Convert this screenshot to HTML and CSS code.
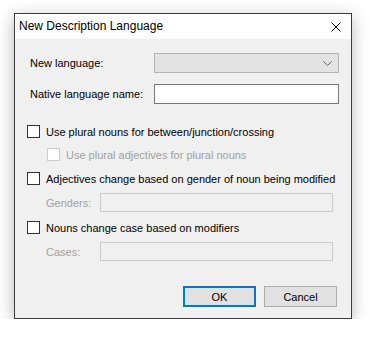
FILE: index.html
```html
<!DOCTYPE html>
<html lang="en">
<head>
    <meta charset="UTF-8">
    <title>New Description Language</title>
    <link rel="stylesheet" href="styles.css">
</head>
<body>

    <!-- Dialog Window -->
    <div class="window">
        <div class="titlebar">
            <span class="title">New Description Language</span>
            <svg class="close" width="10" height="10" viewBox="0 0 10 10">
                <path d="M0.5 0.5 L9.5 9.5 M9.5 0.5 L0.5 9.5" stroke="#000" stroke-width="1" fill="none"/>
            </svg>
        </div>

        <div class="content">
            <div class="field first">
                <label>New language:</label>
                <div class="combo">
                    <svg width="9" height="5" viewBox="0 0 9 5">
                        <path d="M0.5 0.5 L4.5 4.5 L8.5 0.5" stroke="#606060" stroke-width="1" fill="none"/>
                    </svg>
                </div>
            </div>
            <div class="field second">
                <label>Native language name:</label>
                <div class="textbox"></div>
            </div>

            <div class="check c1">
                <span class="box"></span>
                <span>Use plural nouns for between/junction/crossing</span>
            </div>
            <div class="check c2 disabled">
                <span class="box"></span>
                <span>Use plural adjectives for plural nouns</span>
            </div>
            <div class="check c3">
                <span class="box"></span>
                <span>Adjectives change based on gender of noun being modified</span>
            </div>
            <div class="subfield s1">
                <label>Genders:</label>
                <div class="textbox off"></div>
            </div>
            <div class="check c4">
                <span class="box"></span>
                <span>Nouns change case based on modifiers</span>
            </div>
            <div class="subfield s2">
                <label>Cases:</label>
                <div class="textbox off"></div>
            </div>

            <div class="buttons">
                <button class="btn default">OK</button>
                <button class="btn">Cancel</button>
            </div>
        </div>
    </div>

</body>
</html>
```

FILE: styles.css
```css
body {
    font-family: 'Liberation Sans', Arial, sans-serif;
    font-size: 11px;
    background-color: white;
    color: black;
    margin: 0;
    padding: 0;
}

.window {
    margin: 13px 0 0 14px;
    width: 336px;
    height: 304px;
    border: 1px solid #3c3c3c;
    background-color: #f0f0f0;
    box-shadow: 0 4px 16px rgba(0, 0, 0, 0.28);
    display: flex;
    flex-direction: column;
}

/* Title Bar */
.titlebar {
    height: 25px;
    background-color: white;
    display: flex;
    justify-content: space-between;
    align-items: center;
    padding: 0 10px 0 4px;
}

.titlebar .title {
    font-size: 12px;
    margin-top: -1px;
}

.close {
    display: block;
    margin-top: 1px;
}

/* Dialog Body */
.content {
    flex: 1;
    display: flex;
    flex-direction: column;
    padding: 0 12px 0 15px;
}

.field {
    display: flex;
    align-items: center;
    height: 20px;
}

.field label {
    flex: none;
    width: 124px;
}

.field.first {
    margin-top: 14px;
}

.field.second {
    margin-top: 11px;
}

.combo {
    width: 178px;
    height: 18px;
    border: 1px solid #b4b4b4;
    background-color: #e3e3e3;
    display: flex;
    justify-content: flex-end;
    align-items: center;
    padding-right: 6px;
}

.combo svg {
    display: block;
}

.textbox {
    width: 183px;
    height: 18px;
    border: 1px solid #7a7a7a;
    background-color: white;
}

/* Checkboxes */
.check {
    display: flex;
    align-items: center;
    height: 13px;
    margin-left: -3px;
    white-space: nowrap;
}

.check .box {
    flex: none;
    width: 11px;
    height: 11px;
    border: 1px solid #333;
    background-color: white;
    margin-right: 6px;
}

.check.c1 {
    margin-top: 21px;
}

.check.c2 {
    margin-top: 10px;
    margin-left: 17px;
}

.check.c3 {
    margin-top: 11px;
}

.check.c4 {
    margin-top: 9px;
}

.disabled {
    color: #a0a0a0;
}

.check.disabled .box {
    border-color: #cccccc;
}

.subfield {
    display: flex;
    align-items: center;
    height: 19px;
    color: #a0a0a0;
    padding-left: 16px;
}

.subfield label {
    flex: none;
    width: 54px;
}

.subfield .textbox.off {
    width: 231px;
    height: 17px;
    border-color: #cccccc;
    background-color: #f0f0f0;
}

.subfield.s1 {
    margin-top: 8px;
}

.subfield.s2 {
    margin-top: 8px;
}

/* Buttons */
.buttons {
    display: flex;
    justify-content: flex-end;
    gap: 8px;
    margin-top: 25px;
    padding-right: 2px;
}

.btn {
    font-family: 'Liberation Sans', Arial, sans-serif;
    font-size: 11px;
    width: 73px;
    height: 21px;
    background-color: #e1e1e1;
    border: 1px solid #adadad;
    padding: 0;
    color: black;
}

.btn.default {
    border: 2px solid #0078d7;
}
```
